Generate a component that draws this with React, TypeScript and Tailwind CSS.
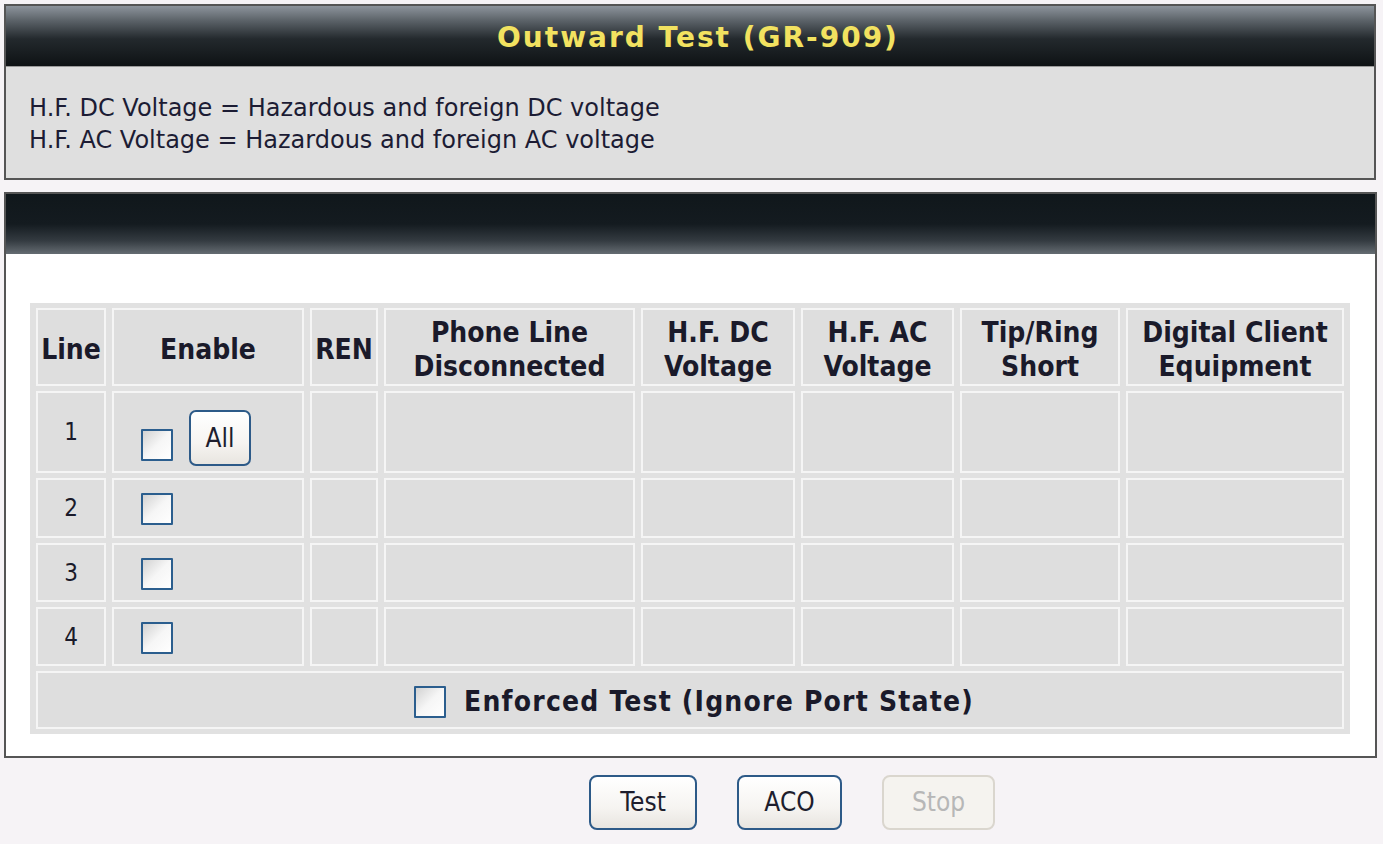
import React from "react";

const FONT = "font-['DejaVu_Sans_Condensed','DejaVu_Sans',sans-serif]";

const cols = [
  { key: "line", label: ["Line"], w: "w-[70px]" },
  { key: "enable", label: ["Enable"], w: "w-[192px]" },
  { key: "ren", label: ["REN"], w: "w-[68px]" },
  { key: "pld", label: ["Phone Line", "Disconnected"], w: "w-[251px]" },
  { key: "dc", label: ["H.F. DC", "Voltage"], w: "w-[154px]" },
  { key: "ac", label: ["H.F. AC", "Voltage"], w: "w-[153px]" },
  { key: "tr", label: ["Tip/Ring", "Short"], w: "w-[160px]" },
  { key: "dce", label: ["Digital Client", "Equipment"], w: "w-[218px]" },
];

const rows = [
  { n: 1, h: "h-[82px]" },
  { n: 2, h: "h-[60px]" },
  { n: 3, h: "h-[59px]" },
  { n: 4, h: "h-[59px]" },
];

const cellCls = "border-2 border-[#f5f5f5] bg-[#dedede]";

function Check() {
  return (
    <input
      type="checkbox"
      className="m-0 h-[32px] w-[32px] shrink-0 cursor-pointer appearance-none rounded-[1px] border-2 border-[#2b5e8e] bg-[linear-gradient(135deg,#d2d2d2_0%,#f6f6f6_50%,#ffffff_100%)] align-middle"
    />
  );
}

function Btn({ children, disabled, w }: { children: React.ReactNode; disabled?: boolean; w: string }) {
  return (
    <button
      disabled={disabled}
      className={`h-[55px] ${w} rounded-[8px] border-2 text-[26px] ${
        disabled
          ? "border-[#dad6ce] bg-[#f5f3ef] text-[#b7b7b7]"
          : "border-[#2d5a88] bg-[linear-gradient(to_bottom,#ffffff_0%,#f6f4f1_60%,#e8e5e0_100%)] text-[#1e1e2e]"
      }`}
    >
      {children}
    </button>
  );
}

export default function App() {
  return (
    <div className={`min-h-[844px] w-[1383px] bg-[#f6f3f6] pt-[4px] ${FONT}`}>
      <div className="ml-[4px] w-[1372px] border-2 border-[#555555]">
        <div className="flex h-[60px] items-center justify-center bg-[linear-gradient(to_bottom,#8d949c_0%,#5a6167_25%,#23292d_55%,#0e1214_100%)] pl-[16px] pt-[4px]">
          <h1 className="font-['DejaVu_Sans',sans-serif] text-[28px] font-bold tracking-[2px] text-[#f2e260]">
            Outward Test (GR-909)
          </h1>
        </div>
        <div className="h-[112px] border-t border-[#9a9a9a] bg-[#dfdfdf] pl-[23px] pt-[25px] font-['DejaVu_Sans',sans-serif] text-[24px] leading-[32px] text-[#1c1c34]">
          <p>H.F. DC Voltage = Hazardous and foreign DC voltage</p>
          <p>H.F. AC Voltage = Hazardous and foreign AC voltage</p>
        </div>
      </div>

      <div className="ml-[4px] mt-[12px] w-[1373px] border-2 border-[#555555]">
        <div className="h-[60px] bg-[linear-gradient(to_bottom,#10171b_0%,#141b20_50%,#343b41_78%,#656c72_100%)]" />
        <div className="h-[502px] bg-white pl-[24px] pt-[49px]">
          <table className="w-[1320px] table-fixed border-separate border-spacing-x-[6px] border-spacing-y-[5px] bg-[#e1e1e1] text-[#1a1a2a]">
            <thead>
              <tr>
                {cols.map((c) => (
                  <th
                    key={c.key}
                    className={`${cellCls} ${c.w} h-[78px] p-0 pt-[6px] text-center text-[28px] font-bold leading-[34px]`}
                  >
                    {c.label.map((l) => (
                      <div key={l}>{l}</div>
                    ))}
                  </th>
                ))}
              </tr>
            </thead>
            <tbody>
              {rows.map((r) => (
                <tr key={r.n}>
                  <td className={`${cellCls} ${r.h} p-0 text-center text-[24px]`}>{r.n}</td>
                  <td className={`${cellCls} ${r.h} p-0 pl-[27px]`}>
                    {r.n === 1 ? (
                      <div className="flex items-end gap-[16px] pt-[12px]">
                        <div className="pb-[5px]">
                          <Check />
                        </div>
                        <button className="h-[56px] w-[62px] rounded-[7px] border-2 border-[#2d5a88] bg-[linear-gradient(to_bottom,#ffffff_0%,#f6f4f1_60%,#e8e5e0_100%)] text-[26px] text-[#1e1e2e]">
                          All
                        </button>
                      </div>
                    ) : (
                      <div className="flex items-center pt-[2px]">
                        <Check />
                      </div>
                    )}
                  </td>
                  {cols.slice(2).map((c) => (
                    <td key={c.key} className={`${cellCls} ${r.h} p-0`} />
                  ))}
                </tr>
              ))}
              <tr>
                <td colSpan={8} className={`${cellCls} h-[58px] p-0`}>
                  <div className="flex items-center justify-center gap-[18px] pl-[8px] pt-[4px]">
                    <Check />
                    <span className="text-[28px] font-bold tracking-[1.2px]">Enforced Test (Ignore Port State)</span>
                  </div>
                </td>
              </tr>
            </tbody>
          </table>
        </div>
      </div>

      <div className="flex gap-[40px] pl-[589px] pt-[17px]">
        <Btn w="w-[108px]">Test</Btn>
        <Btn w="w-[105px]">ACO</Btn>
        <Btn w="w-[113px]" disabled>
          Stop
        </Btn>
      </div>
    </div>
  );
}
